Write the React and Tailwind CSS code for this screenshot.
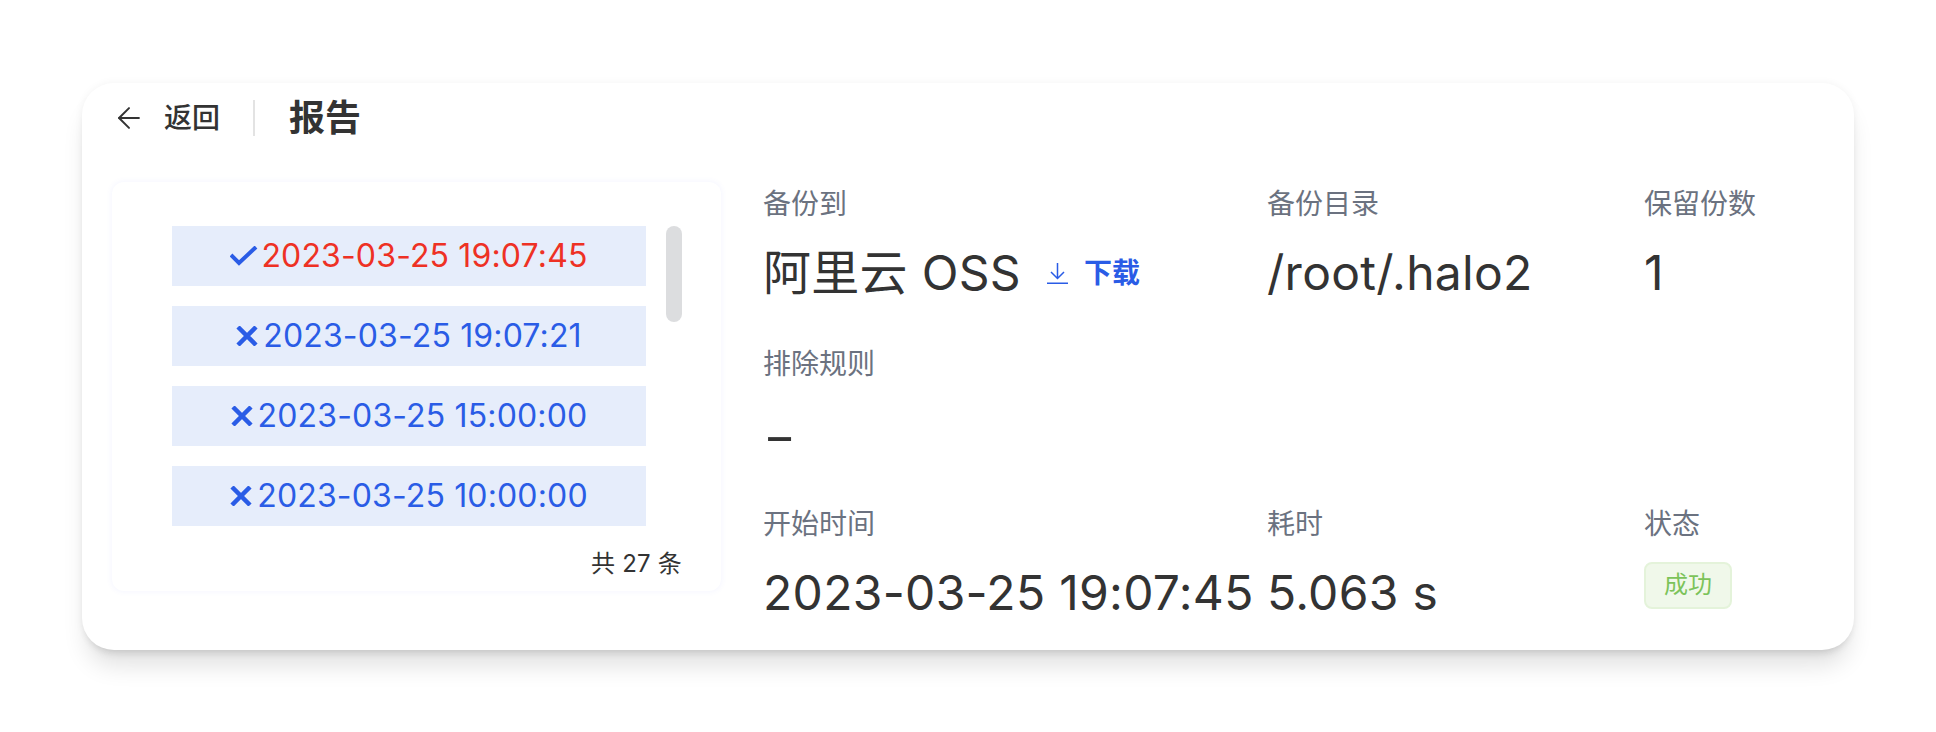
import { ArrowLeft } from "lucide-react";

const font = { fontFamily: '"Inter", "Noto Sans CJK SC", sans-serif' };

const backups = [
    { time: "2023-03-25 19:07:45", active: true },
    { time: "2023-03-25 19:07:21" },
    { time: "2023-03-25 15:00:00" },
    { time: "2023-03-25 10:00:00" },
];

function Field({ label, children }) {
    return (
        <div className="flex flex-col gap-[13px]">
            <div className="h-10 text-[28px] leading-10 text-[#6b7280]">{label}</div>
            <div className="flex h-[72px] items-center text-[48px] leading-[72px] tracking-[0.3px] text-[#333333]">{children}</div>
        </div>
    );
}

function BackupRow({ time, active }) {
    return (
        <div className="flex h-[60px] items-center justify-center bg-[#e6edfb] text-[32px] tracking-[0.15px] text-[#2a5ce6]">
            {active ? (
                <svg viewBox="0 0 28 20" className="h-5 w-7 shrink-0" fill="none" stroke="currentColor" strokeWidth="4">
                    <path d="M1 9l8 8L26 1" />
                </svg>
            ) : (
                <svg viewBox="0 0 22 20" className="h-5 w-[22px] shrink-0" fill="none" stroke="currentColor" strokeWidth="4.5">
                    <path d="M2 1l18 18M20 1L2 19" />
                </svg>
            )}
            <span className={active ? "ml-[3px] text-[#ee3124]" : "ml-[5px]"}>{time}</span>
        </div>
    );
}

export default function App() {
    return (
        <div style={font} className="min-h-[732px] bg-white pl-[82px] pt-[83px]">
            <div className="h-[567px] w-[1772px] rounded-[32px] bg-white px-[30px] pt-[17px] shadow-[0_0_8px_rgba(0,0,0,0.05),0_20px_25px_-5px_rgba(0,0,0,0.12),0_8px_10px_-6px_rgba(0,0,0,0.12)]">
                <div className="flex h-9 items-center">
                    <ArrowLeft size={34} strokeWidth={1.4} className="text-[#333333]" />
                    <span className="ml-[18px] text-[28px] font-medium text-[#333333]">返回</span>
                    <div className="ml-[33px] h-9 w-[2px] bg-[#e3e3e3]" />
                    <span className="ml-[34px] text-[36px] font-semibold text-[#333333]">报告</span>
                </div>

                <div className="mt-[46px] flex gap-[42px]">
                    <div className="h-[409px] w-[609px] shrink-0 rounded-xl pl-[60px] pr-[39px] pt-[44px] shadow-[0_0_6px_rgba(90,100,255,0.08)]">
                        <div className="flex gap-5">
                            <div className="flex w-[474px] flex-col gap-5">
                                {backups.map((b) => (
                                    <BackupRow key={b.time} {...b} />
                                ))}
                            </div>
                            <div className="h-24 w-4 rounded-lg bg-[#dcdddf]" />
                        </div>
                        <div className="mt-5 text-right text-[24px] leading-9 tracking-[0.2px] text-[#333333]">共 27 条</div>
                    </div>

                    <div className="grid flex-1 grid-cols-[504px_377px_1fr] gap-y-[35px] pt-[2px]">
                        <Field label="备份到">
                            <span>阿里云 OSS</span>
                            <span className="ml-[26px] flex items-center gap-4 text-[28px] font-semibold tracking-normal text-[#2a5ce6]">
                                <svg viewBox="0 0 21 21" className="h-[21px] w-[21px]" fill="none" stroke="currentColor" strokeWidth="1.5">
                                    <path d="M10.5 0v15M4 9l6.5 6.5L17 9M0 20.2h21" />
                                </svg>
                                下载
                            </span>
                        </Field>
                        <Field label="备份目录">/root/.halo2</Field>
                        <Field label="保留份数">1</Field>
                        <div className="col-span-3">
                            <Field label="排除规则">
                                <span className="inline-block origin-left translate-y-[4px] scale-x-[1.5]">-</span>
                            </Field>
                        </div>
                        <Field label="开始时间">2023-03-25 19:07:45</Field>
                        <Field label="耗时">5.063 s</Field>
                        <Field label="状态">
                            <span className="-mt-[16px] flex h-[47px] w-[88px] items-center justify-center rounded-lg border-2 border-[#e4f3da] bg-[#f0f8ea] text-[24px] leading-none tracking-normal text-[#7cc35a]">
                                成功
                            </span>
                        </Field>
                    </div>
                </div>
            </div>
        </div>
    );
}
